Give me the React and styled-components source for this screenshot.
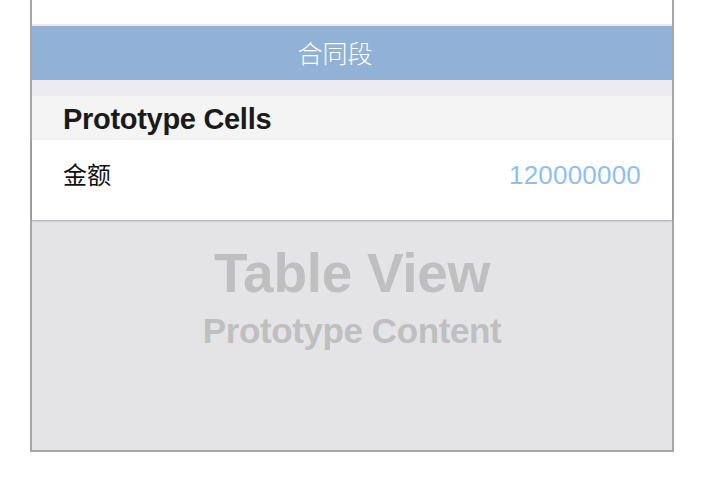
import React from 'react';
import styled, { createGlobalStyle } from 'styled-components';

const GlobalStyle = createGlobalStyle`
  html, body {
    margin: 0;
    padding: 0;
    background: #ffffff;
  }
  body {
    font-family: "Liberation Sans", Arial, "Noto Sans CJK SC", sans-serif;
  }
`;

const Frame = styled.div`
  margin-left: 30px;
  width: 640px;
  height: 450px;
  border: 2px solid #a7a7a7;
  border-top: none;
  background: #e4e4e7;
  display: flex;
  flex-direction: column;
`;

const TopSpace = styled.div`
  height: 24px;
  background: #ffffff;
  border-bottom: 2px solid #e8e8ee;
`;

const SectionBar = styled.div`
  height: 54px;
  background: #91b2d6;
  color: #ffffff;
  display: flex;
  align-items: center;
  justify-content: center;
  padding: 0 34px 2px 0;
  box-sizing: border-box;
  font-family: "Noto Sans CJK SC", sans-serif;
  font-size: 25px;
  font-weight: 300;
`;

const Gap = styled.div`
  height: 16px;
  background: #ebebf0;
`;

const Header = styled.div`
  height: 44px;
  background: #f4f4f4;
  display: flex;
  align-items: center;
  padding-left: 31px;
  padding-top: 2px;
  box-sizing: border-box;
  font-size: 29px;
  font-weight: 700;
  color: #1a1a1a;
  letter-spacing: -0.3px;
`;

const Cell = styled.div`
  height: 80px;
  background: #ffffff;
  display: flex;
  align-items: center;
  justify-content: space-between;
  padding: 0 31px 14px 31px;
  box-sizing: border-box;
  box-shadow: 0 1px 2px rgba(0, 0, 0, 0.28);
  position: relative;
  z-index: 1;
`;

const Label = styled.span`
  font-family: "Noto Sans CJK SC", sans-serif;
  font-size: 24px;
  color: #111111;
`;

const Value = styled.span`
  font-size: 26px;
  color: #8ebff0;
  letter-spacing: 0.2px;
  margin-top: 4px;
`;

const Placeholder = styled.div`
  flex: 1;
  display: flex;
  flex-direction: column;
  align-items: center;
  padding-top: 21px;
  color: #bfbfbf;
  font-weight: 700;
`;

const BigTitle = styled.div`
  font-size: 55px;
  line-height: 64px;
  letter-spacing: -0.3px;
`;

const SubTitle = styled.div`
  font-size: 35px;
  line-height: 40px;
  margin-top: 6px;
  letter-spacing: -0.4px;
`;

const App = () => (
  <>
    <GlobalStyle />
    <Frame>
      <TopSpace />
      <SectionBar>合同段</SectionBar>
      <Gap />
      <Header>Prototype Cells</Header>
      <Cell>
        <Label>金额</Label>
        <Value>120000000</Value>
      </Cell>
      <Placeholder>
        <BigTitle>Table View</BigTitle>
        <SubTitle>Prototype Content</SubTitle>
      </Placeholder>
    </Frame>
  </>
);

export default App;
